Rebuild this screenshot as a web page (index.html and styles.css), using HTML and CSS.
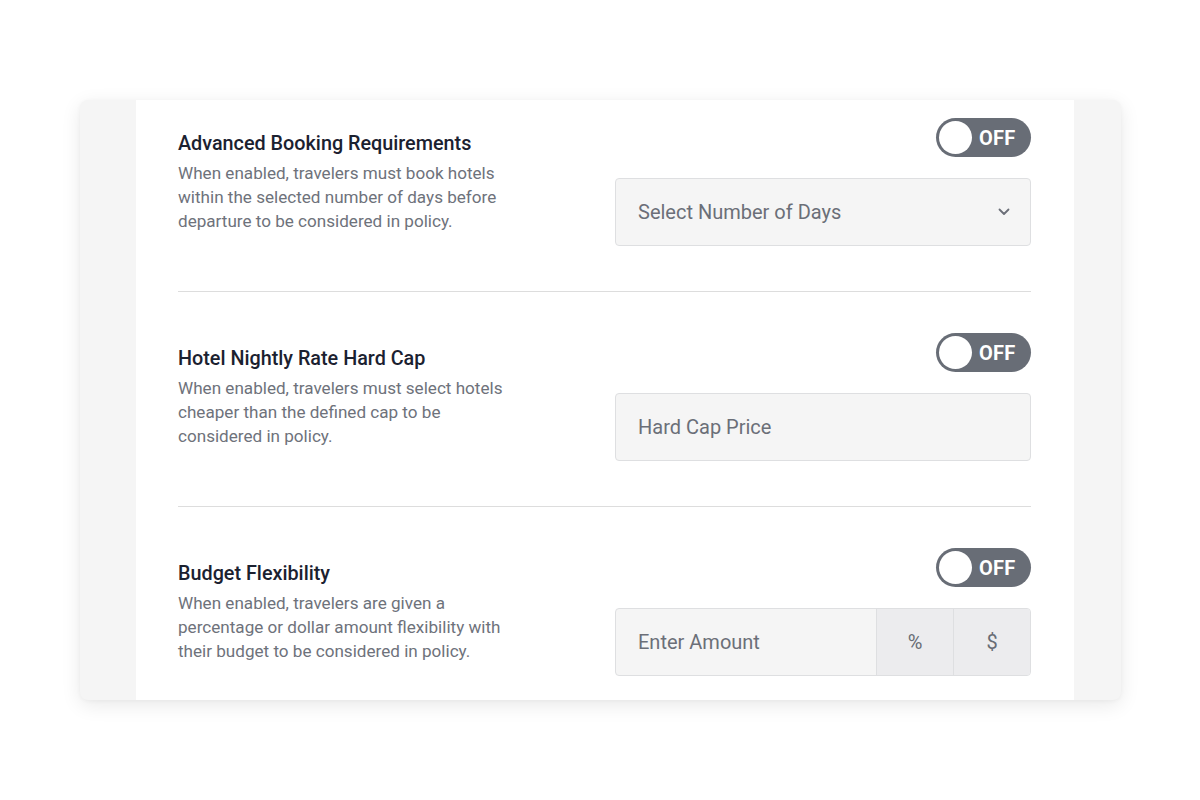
FILE: index.html
```html
<!DOCTYPE html>
<html lang="en">
<head>
<meta charset="utf-8">
<title>Hotel Policy</title>
<link rel="stylesheet" href="styles.css">
</head>
<body>
<div class="stage">
  <div class="card">
    <div class="panel">
      <section class="rule">
        <div class="rule-text">
          <h3 class="rule-title">Advanced Booking Requirements</h3>
          <p class="rule-desc">When enabled, travelers must book hotels within the selected number of days before departure to be considered in policy.</p>
        </div>
        <div class="rule-controls">
          <div class="toggle"><span class="knob"></span><span class="toggle-label">OFF</span></div>
          <div class="field select">
            <span class="placeholder">Select Number of Days</span>
            <svg class="chevron" width="12" height="8" viewBox="0 0 12 8"><path d="M1.5 1.5 L6 6 L10.5 1.5" fill="none" stroke="#6b6f78" stroke-width="1.8" stroke-linecap="round" stroke-linejoin="round"/></svg>
          </div>
        </div>
      </section>
      <hr class="divider">
      <section class="rule">
        <div class="rule-text">
          <h3 class="rule-title">Hotel Nightly Rate Hard Cap</h3>
          <p class="rule-desc">When enabled, travelers must select hotels cheaper than the defined cap to be considered in policy.</p>
        </div>
        <div class="rule-controls">
          <div class="toggle"><span class="knob"></span><span class="toggle-label">OFF</span></div>
          <div class="field">
            <span class="placeholder">Hard Cap Price</span>
          </div>
        </div>
      </section>
      <hr class="divider">
      <section class="rule">
        <div class="rule-text">
          <h3 class="rule-title">Budget Flexibility</h3>
          <p class="rule-desc">When enabled, travelers are given a percentage or dollar amount flexibility with their budget to be considered in policy.</p>
        </div>
        <div class="rule-controls">
          <div class="toggle"><span class="knob"></span><span class="toggle-label">OFF</span></div>
          <div class="field group">
            <span class="placeholder grow">Enter Amount</span>
            <span class="addon">%</span>
            <span class="addon">$</span>
          </div>
        </div>
      </section>
    </div>
  </div>
</div>
</body>
</html>
```

FILE: styles.css
```css
* { box-sizing: border-box; }

html, body {
  margin: 0;
  padding: 0;
  background: #ffffff;
  font-family: Roboto, "Liberation Sans", sans-serif;
}

.stage {
  width: 1200px;
  height: 800px;
  padding: 100px 79px 0 80px;
}

.card {
  height: 600px;
  background: #f5f5f5;
  border-radius: 8px;
  box-shadow: 0 5px 20px rgba(0, 0, 0, 0.09), 0 1px 4px rgba(0, 0, 0, 0.04);
  padding: 0 47px 0 56px;
  overflow: hidden;
}

.panel {
  height: 100%;
  background: #ffffff;
  padding: 18px 43px 0 42px;
}

.rule {
  display: flex;
  align-items: center;
  justify-content: space-between;
}

.rule-text {
  width: 345px;
}

.rule-title {
  margin: 0 0 5px;
  font-size: 19.8px;
  line-height: 24px;
  font-weight: 500;
  color: #1b2130;
}

.rule-desc {
  margin: 0;
  font-size: 17.1px;
  line-height: 24px;
  color: #6e727b;
}

.rule-controls {
  width: 416px;
  display: flex;
  flex-direction: column;
  align-items: flex-end;
  gap: 21px;
}

.toggle {
  width: 95px;
  height: 39px;
  border-radius: 20px;
  background: #686d76;
  display: flex;
  align-items: center;
  padding-left: 3px;
}

.knob {
  width: 33px;
  height: 33px;
  border-radius: 50%;
  background: #ffffff;
}

.toggle-label {
  margin-left: 7px;
  color: #ffffff;
  font-weight: 700;
  font-size: 20px;
  letter-spacing: 0.2px;
}

.field {
  width: 416px;
  height: 68px;
  background: #f5f5f5;
  border: 1px solid #dedfe1;
  border-radius: 4px;
  display: flex;
  align-items: center;
  padding: 0 22px;
}

.placeholder {
  font-size: 20px;
  color: #6b6f78;
}

.select {
  justify-content: space-between;
  padding-right: 20px;
}

.chevron {
  display: block;
}

.group {
  padding: 0;
  overflow: hidden;
}

.grow {
  flex: 1;
  padding-left: 22px;
}

.addon {
  width: 77px;
  height: 100%;
  display: flex;
  align-items: center;
  justify-content: center;
  background: #ececee;
  border-left: 1px solid #dedfe1;
  font-size: 20px;
  color: #686c75;
}

.divider {
  border: 0;
  border-top: 1px solid #dddddd;
  margin: 45px 0 41px;
}
```
